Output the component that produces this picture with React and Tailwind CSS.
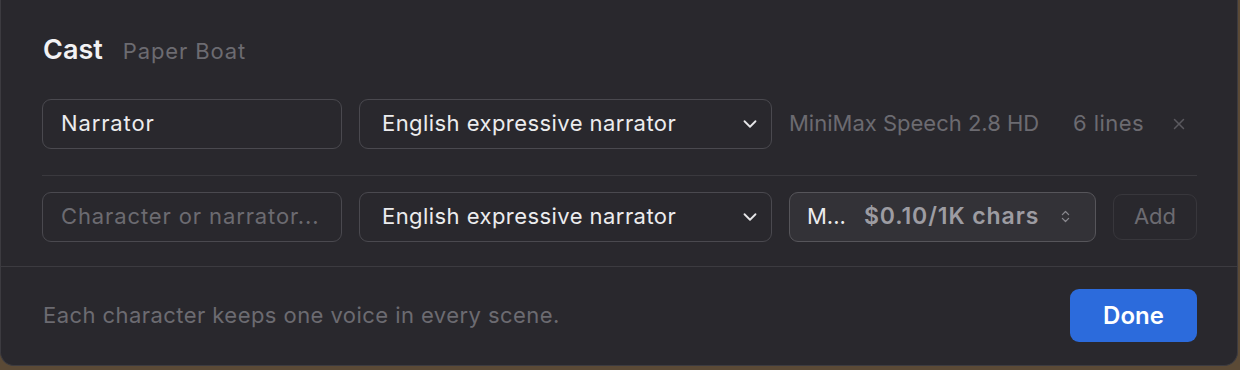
import { ChevronDown, ChevronsUpDown, X } from "lucide-react";

const font = { fontFamily: "Inter, 'Noto Sans', sans-serif" };

function Field({ value, placeholder }) {
  return (
    <div className="w-[300px] h-[50px] shrink-0 rounded-[9px] border border-[#4a494f] bg-[#29282d] px-[18px] flex items-center text-[22px] tracking-[0.04em]">
      {value ? (
        <span className="text-[#ececee]">{value}</span>
      ) : (
        <span className="text-[#6c6b71]">{placeholder}</span>
      )}
    </div>
  );
}

function VoiceSelect() {
  return (
    <div className="w-[413px] h-[50px] shrink-0 rounded-[9px] border border-[#4a494f] bg-[#29282d] pl-[22px] pr-[10px] flex items-center justify-between text-[22px] tracking-[0.02em] text-[#ececee]">
      <span>English expressive narrator</span>
      <ChevronDown size={22} strokeWidth={2} className="text-[#e6e6e8]" />
    </div>
  );
}

export default function App() {
  return (
    <div className="min-h-[370px] bg-[#5b4a36]" style={font}>
      <div className="w-[1238px] h-[366px] bg-[#29282d] border-x border-b border-[#3c3b40] rounded-b-[14px] flex flex-col">
        <div className="pl-[41px] pr-[40px] pt-[30px]">
          <div className="flex items-baseline gap-[20px] pl-[1px]">
            <h1 className="text-[27px] font-semibold text-[#f2f2f4]">Cast</h1>
            <span className="text-[22px] tracking-[0.04em] text-[#6c6b71]">Paper Boat</span>
          </div>

          <div className="mt-[28px] pb-[26px] border-b border-[#3a393e] flex items-center gap-[17px]">
            <Field value="Narrator" />
            <VoiceSelect />
            <span className="text-[22px] text-[#6c6b71]">MiniMax Speech 2.8 HD</span>
            <span className="ml-auto text-[22px] tracking-[0.02em] text-[#6c6b71]">6 lines</span>
            <button className="w-[36px] h-[36px] flex items-center justify-center text-[#5a595f]">
              <X size={18} strokeWidth={2} />
            </button>
          </div>

          <div className="mt-[16px] flex items-center gap-[17px]">
            <Field placeholder="Character or narrator..." />
            <VoiceSelect />
            <div className="w-[307px] h-[50px] shrink-0 rounded-[9px] border border-[#56555a] bg-[#333237] pl-[17px] pr-[22px] flex items-center text-[22px]">
              <span className="text-[#ececee] min-w-0 truncate">M...</span>
              <span className="ml-[18px] text-[23px] font-semibold tracking-[0.04em] text-[#9d9ca2]">$0.10/1K chars</span>
              <ChevronsUpDown size={15} strokeWidth={2} className="ml-auto text-[#8a898f]" />
            </div>
            <button className="w-[86px] h-[46px] rounded-[9px] border border-[#38373c] bg-[#29282d] text-[22px] text-[#6c6b71]">
              Add
            </button>
          </div>
        </div>

        <div className="mt-[24px] border-t border-[#3c3b40] pl-[42px] pr-[40px] flex-1 flex items-center justify-between">
          <p className="text-[22px] tracking-[0.02em] text-[#6c6b71]">Each character keeps one voice in every scene.</p>
          <button className="w-[127px] h-[53px] rounded-[9px] bg-[#2c6bdc] text-[24px] font-semibold text-white">
            Done
          </button>
        </div>
      </div>
    </div>
  );
}
